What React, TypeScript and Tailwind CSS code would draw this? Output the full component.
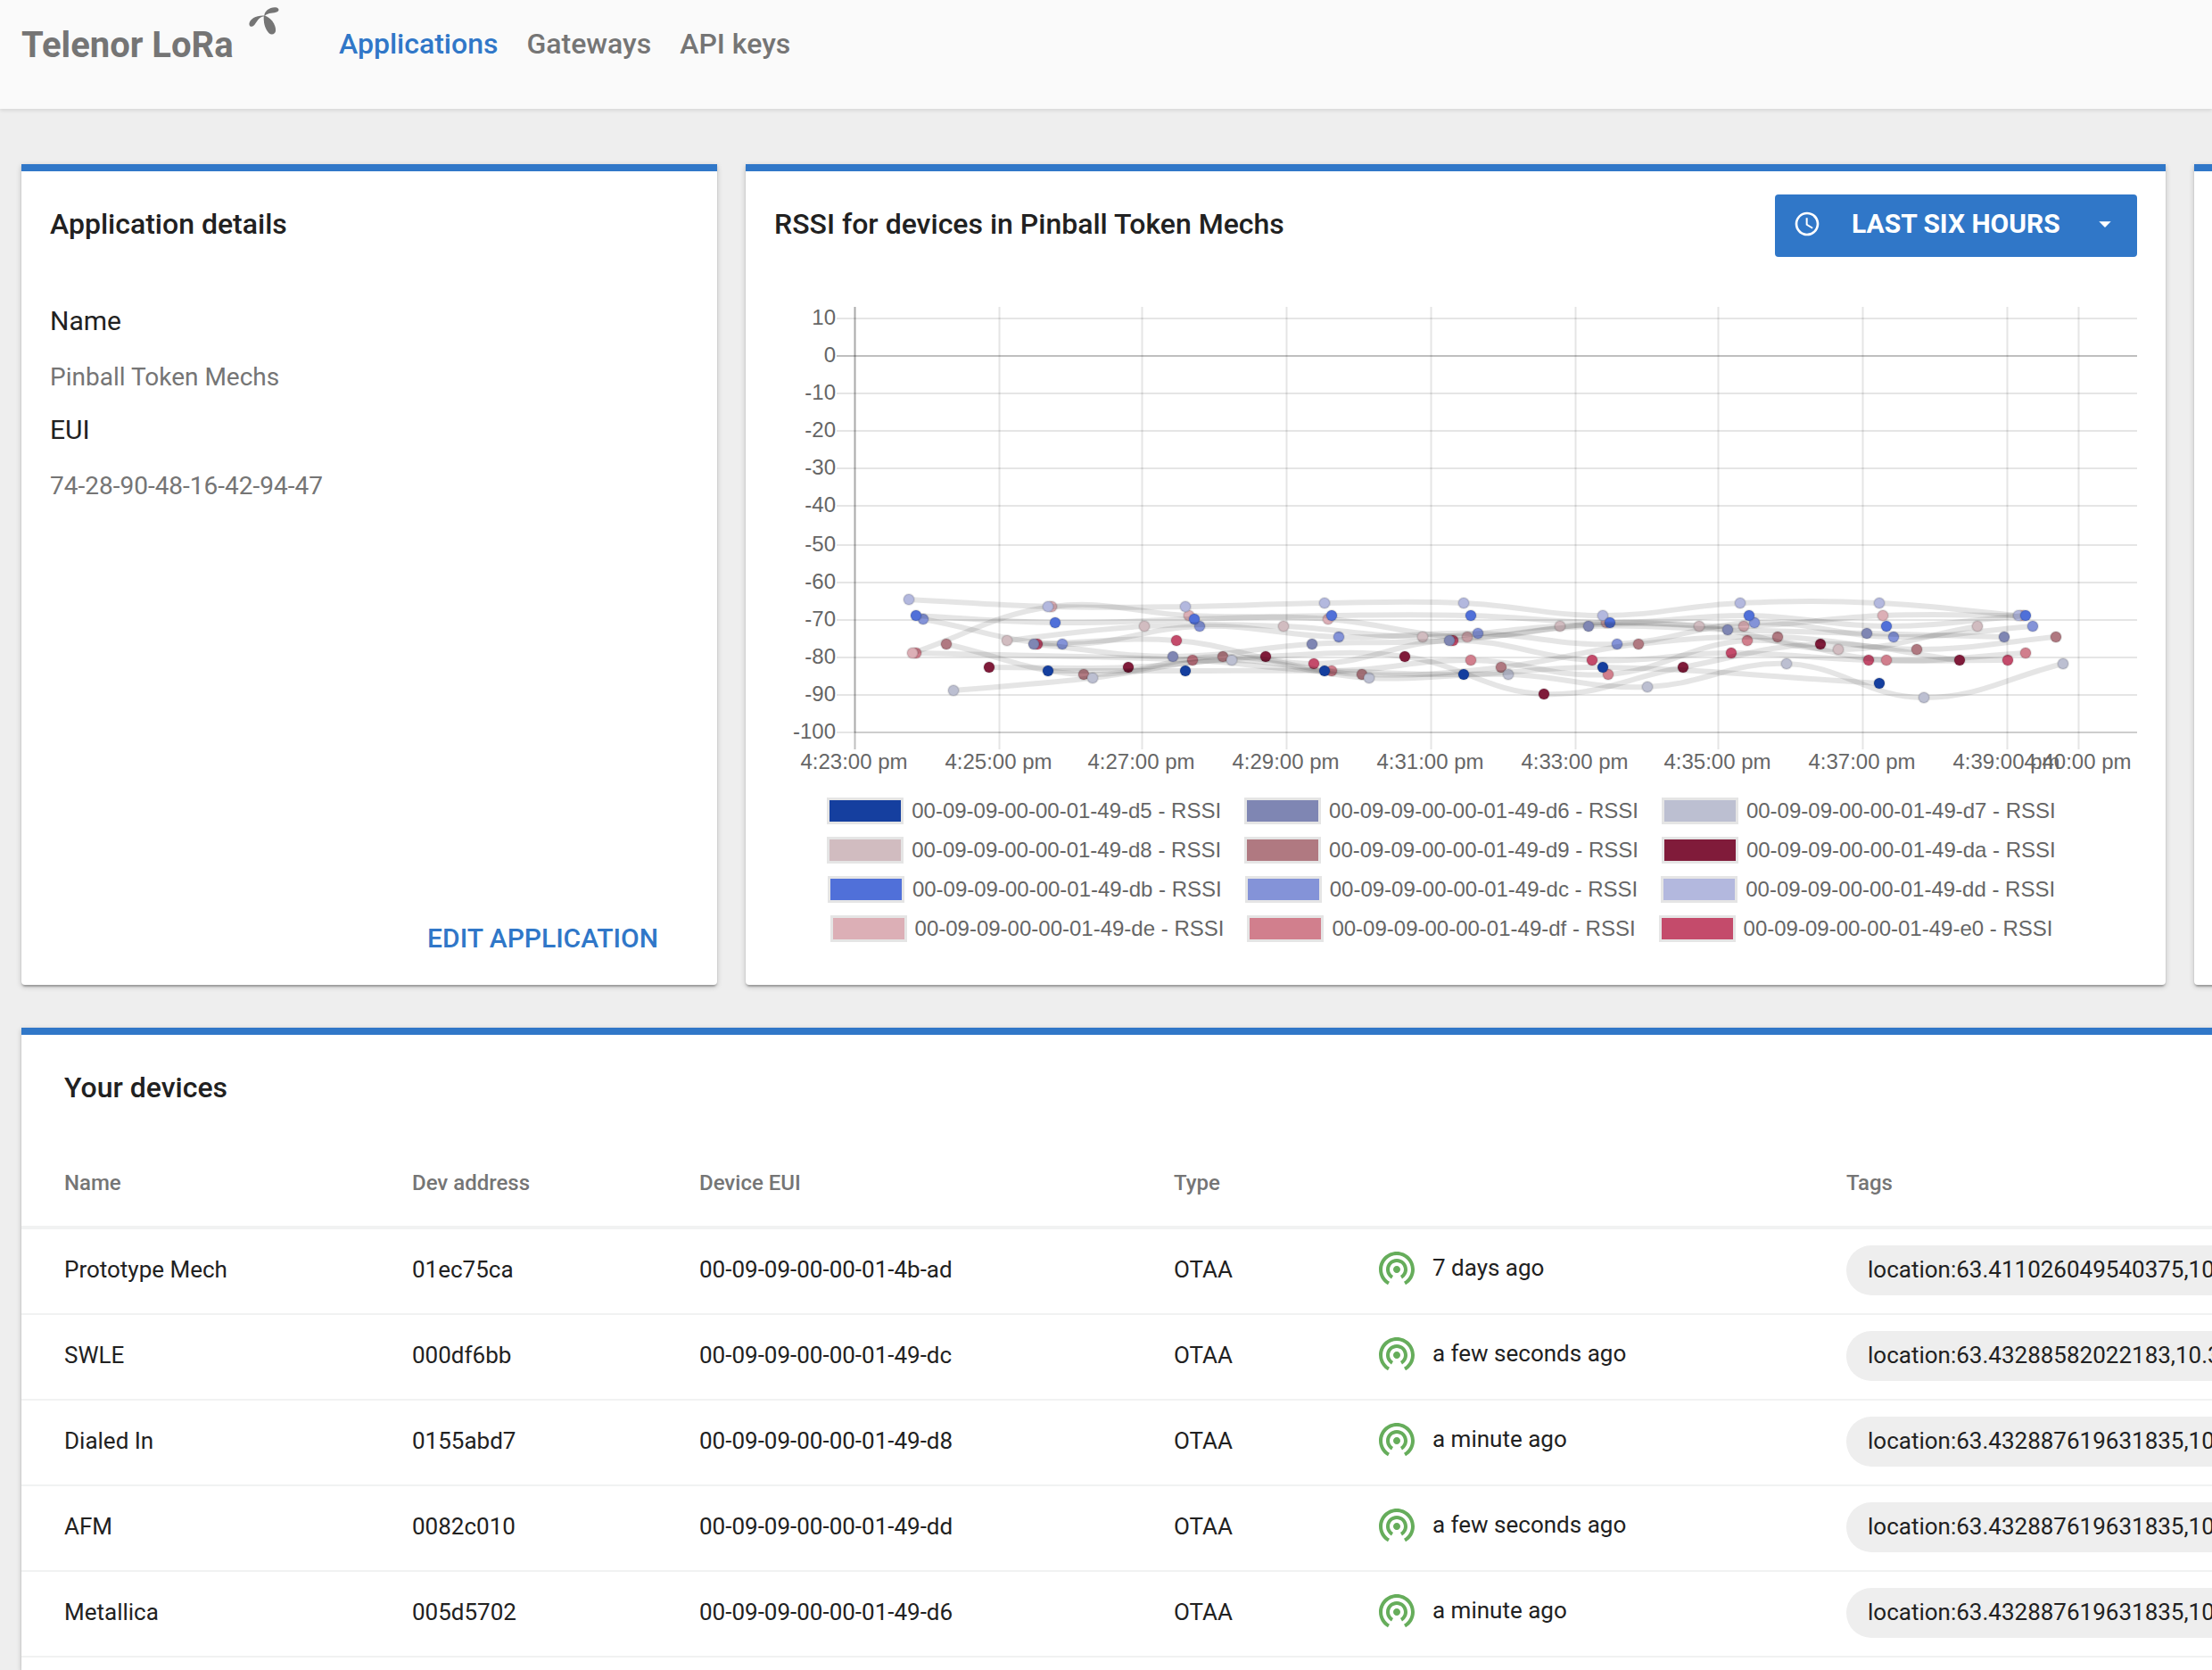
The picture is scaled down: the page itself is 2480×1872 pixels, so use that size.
import { ReactNode } from "react";
import clsx from "clsx";
import { MdAccessTime, MdArrowDropDown, MdWifiTethering } from "react-icons/md";

type Point = [number, number];

type Series = {
  eui: string;
  color: string;
  points: Point[];
};

type Device = {
  name: string;
  address: string;
  eui: string;
  seen: string;
  tag: string;
};

/* ===============================
   DATA
=============================== */

const navLinks = [
  { label: "Applications", href: "#applications", active: true },
  { label: "Gateways", href: "#gateways", active: false },
  { label: "API keys", href: "#api-keys", active: false },
];

const devices: Device[] = [
  {
    name: "Prototype Mech",
    address: "01ec75ca",
    eui: "00-09-09-00-00-01-4b-ad",
    seen: "7 days ago",
    tag: "location:63.411026049540375,10.39",
  },
  {
    name: "SWLE",
    address: "000df6bb",
    eui: "00-09-09-00-00-01-49-dc",
    seen: "a few seconds ago",
    tag: "location:63.43288582022183,10.39",
  },
  {
    name: "Dialed In",
    address: "0155abd7",
    eui: "00-09-09-00-00-01-49-d8",
    seen: "a minute ago",
    tag: "location:63.432887619631835,10.39",
  },
  {
    name: "AFM",
    address: "0082c010",
    eui: "00-09-09-00-00-01-49-dd",
    seen: "a few seconds ago",
    tag: "location:63.432887619631835,10.39",
  },
  {
    name: "Metallica",
    address: "005d5702",
    eui: "00-09-09-00-00-01-49-d6",
    seen: "a minute ago",
    tag: "location:63.432887619631835,10.39",
  },
];

// points are in chart units, see the viewBox of RssiChart
const series: Series[] = [
  {
    eui: "00-09-09-00-00-01-49-d5",
    color: "#153f9f",
    points: [[307, 432], [461, 432], [617, 432], [773, 436], [929, 428], [1239, 446]],
  },
  {
    eui: "00-09-09-00-00-01-49-d6",
    color: "#7f86b3",
    points: [[291, 402], [447, 416], [603, 402], [757, 398], [913, 382], [1069, 386], [1225, 390], [1379, 394]],
  },
  {
    eui: "00-09-09-00-00-01-49-d7",
    color: "#bcbfd1",
    points: [[201, 454], [357, 440], [513, 420], [667, 440], [823, 436], [979, 450], [1135, 424], [1289, 462], [1445, 424]],
  },
  {
    eui: "00-09-09-00-00-01-49-d8",
    color: "#d1bcc0",
    points: [[261, 398], [415, 382], [571, 382], [727, 394], [881, 382], [1037, 382], [1193, 408], [1349, 382]],
  },
  {
    eui: "00-09-09-00-00-01-49-d9",
    color: "#b07981",
    points: [[193, 402], [347, 436], [503, 416], [659, 436], [815, 428], [969, 402], [1125, 394], [1281, 408], [1437, 394]],
  },
  {
    eui: "00-09-09-00-00-01-49-da",
    color: "#801b3a",
    points: [[241, 428], [397, 428], [551, 416], [707, 416], [863, 458], [1019, 428], [1173, 402], [1329, 420]],
  },
  {
    eui: "00-09-09-00-00-01-49-db",
    color: "#5070d9",
    points: [[159, 370], [315, 378], [471, 374], [625, 370], [781, 370], [937, 378], [1093, 370], [1247, 382], [1403, 370]],
  },
  {
    eui: "00-09-09-00-00-01-49-dc",
    color: "#8493d8",
    points: [[167, 374], [323, 402], [477, 382], [633, 394], [789, 390], [945, 402], [1099, 378], [1255, 394], [1411, 382]],
  },
  {
    eui: "00-09-09-00-00-01-49-dd",
    color: "#b3b8de",
    points: [[151, 352], [307, 360], [461, 360], [617, 356], [773, 356], [929, 370], [1083, 356], [1239, 356], [1395, 370]],
  },
  {
    eui: "00-09-09-00-00-01-49-de",
    color: "#dcafb6",
    points: [[155, 412], [311, 360], [465, 370], [621, 374], [777, 394], [933, 378], [1087, 382], [1243, 370], [1399, 370]],
  },
  {
    eui: "00-09-09-00-00-01-49-df",
    color: "#d17f8d",
    points: [[159, 412], [469, 420], [625, 432], [781, 420], [935, 436], [1091, 398], [1247, 420], [1403, 412]],
  },
  {
    eui: "00-09-09-00-00-01-49-e0",
    color: "#c44b6b",
    points: [[295, 402], [451, 398], [605, 424], [761, 398], [917, 420], [1073, 412], [1227, 420], [1383, 420]],
  },
];

const yTicks = [
  { label: "10", y: 37 },
  { label: "0", y: 79 },
  { label: "-10", y: 121 },
  { label: "-20", y: 163 },
  { label: "-30", y: 205 },
  { label: "-40", y: 247 },
  { label: "-50", y: 291 },
  { label: "-60", y: 333 },
  { label: "-70", y: 375 },
  { label: "-80", y: 417 },
  { label: "-90", y: 459 },
  { label: "-100", y: 501 },
];

const xTicks = [
  { label: "4:23:00 pm", x: 90.5 },
  { label: "4:25:00 pm", x: 252.5 },
  { label: "4:27:00 pm", x: 412.5 },
  { label: "4:29:00 pm", x: 574.5 },
  { label: "4:31:00 pm", x: 736.5 },
  { label: "4:33:00 pm", x: 898.5 },
  { label: "4:35:00 pm", x: 1058.5 },
  { label: "4:37:00 pm", x: 1220.5 },
  { label: "4:39:00 pm", x: 1382.5 },
  { label: "4:40:00 pm", x: 1462.5 },
];

/* ===============================
   CHART
=============================== */

// smooth line through the points, tension 0.4
function splinePath(points: Point[]) {
  const tension = 0.4;

  const controls = points.map((cur, i) => {
    const prev = points[i - 1] ?? cur;
    const next = points[i + 1] ?? cur;
    const before = Math.hypot(cur[0] - prev[0], cur[1] - prev[1]);
    const after = Math.hypot(next[0] - cur[0], next[1] - cur[1]);
    const fa = (tension * before) / (before + after);
    const fb = (tension * after) / (before + after);
    const dx = next[0] - prev[0];
    const dy = next[1] - prev[1];
    return {
      left: [cur[0] - fa * dx, cur[1] - fa * dy],
      right: [cur[0] + fb * dx, cur[1] + fb * dy],
    };
  });

  return points
    .map((p, i) =>
      i === 0
        ? `M${p[0]} ${p[1]}`
        : `C${controls[i - 1].right.join(" ")} ${controls[i].left.join(" ")} ${p[0]} ${p[1]}`
    )
    .join("");
}

function RssiChart() {
  return (
    <svg
      viewBox="0 0 1528 552"
      className="mt-8 block h-auto w-full font-['Liberation_Sans',Arial,sans-serif] text-2xl"
      role="img"
      aria-label="RSSI per device over time"
    >
      {/* GRID */}
      <g stroke="#000" strokeWidth="2" strokeOpacity="0.1">
        {yTicks.map((tick) => (
          <line
            key={tick.label}
            x1="70"
            x2="1528"
            y1={tick.y}
            y2={tick.y}
            strokeOpacity={tick.label === "0" ? 0.25 : 0.1}
          />
        ))}
        {xTicks.map((tick, i) => (
          <line
            key={tick.label}
            x1={tick.x}
            x2={tick.x}
            y1="24"
            y2="520"
            strokeOpacity={i === 0 ? 0.25 : 0.1}
          />
        ))}
        <line x1="90.5" x2="90.5" y1="24" y2="501" />
        <line x1="90" x2="1528" y1="501" y2="501" />
      </g>

      {/* TICK LABELS */}
      <g fill="#666">
        {yTicks.map((tick) => (
          <text key={tick.label} x="69" y={tick.y + 7} textAnchor="end">
            {tick.label}
          </text>
        ))}
        {xTicks.map((tick) => (
          <text key={tick.label} x={tick.x - 1} y="542" textAnchor="middle">
            {tick.label}
          </text>
        ))}
      </g>

      {/* first series ends up on top */}
      {[...series].reverse().map((s) => (
        <g key={s.eui} stroke="#000" strokeOpacity="0.1">
          <path d={splinePath(s.points)} fill="none" strokeWidth="6" />
          {s.points.map(([x, y]) => (
            <circle key={x} cx={x} cy={y} r="6" fill={s.color} strokeWidth="2" />
          ))}
        </g>
      ))}
    </svg>
  );
}

function Legend() {
  return (
    <ul className="mt-[25px] grid gap-5 pr-[29px] font-['Liberation_Sans',Arial,sans-serif] text-2xl leading-6 text-[#666]">
      {[0, 3, 6, 9].map((start) => (
        <li key={start}>
          <ul className="flex justify-center gap-[29px]">
            {series.slice(start, start + 3).map((s) => (
              <li key={s.eui} className="flex gap-3 whitespace-nowrap">
                <span
                  className="h-6 w-20 shadow-[0_0_0_3px_#e5e5e5]"
                  style={{ backgroundColor: s.color }}
                />
                {s.eui} - RSSI
              </li>
            ))}
          </ul>
        </li>
      ))}
    </ul>
  );
}

/* ===============================
   LAYOUT PARTS
=============================== */

function Card({ className, children }: { className?: string; children?: ReactNode }) {
  return (
    <section
      className={clsx(
        "flex flex-col border-t-8 border-[#3077c8] bg-white pt-[26px] shadow-[0_2px_6px_rgba(0,0,0,0.2),0_2px_2px_rgba(0,0,0,0.14),0_4px_2px_-2px_rgba(0,0,0,0.12)]",
        className
      )}
    >
      {children}
    </section>
  );
}

function CardTitle({ children }: { children: ReactNode }) {
  return <h2 className="mt-[13px] text-[32px] leading-10 font-medium">{children}</h2>;
}

function Logo() {
  return (
    <svg viewBox="0 0 34 31" className="-mt-[19px] h-[31px] w-[34px]" fill="currentColor" aria-hidden="true">
      <path d="M17.3 9.6C17.5 4.5 23.5-.2 29.8.3c4 .4 4.8 3.6 2 5-3.8 1.8-10 .6-14 4.6z" />
      <path d="M17.3 9.5C9 8.8 1 13 .4 18.4c-.3 3.3 2.8 4.3 5 2.4C9 17.4 10.3 11 17.2 10.2z" />
      <path d="M16.8 10c-.6 7 1.2 14.7 5.8 19.2 3 2.6 7.4 1 7.5-3.2 0-7-5.6-14.6-12.5-16.5z" />
    </svg>
  );
}

function TimeRange() {
  return (
    <label className="flex h-[70px] w-[406px] items-center rounded bg-[#3077c8] px-5 pb-1 text-white">
      <MdAccessTime className="size-8" />
      <select
        aria-label="Time range"
        defaultValue="6h"
        className="ml-[34px] flex-1 appearance-none bg-transparent text-[30px] leading-9 font-bold uppercase"
      >
        <option value="1h">Last hour</option>
        <option value="6h">Last six hours</option>
        <option value="24h">Last day</option>
      </select>
      <MdArrowDropDown className="size-8" />
    </label>
  );
}

function DeviceTable() {
  return (
    <table className="mt-[39px] w-full table-fixed border-separate border-spacing-0 text-left">
      <colgroup>
        <col className="w-[390px]" />
        <col className="w-[322px]" />
        <col className="w-[532px]" />
        <col className="w-[226px]" />
        <col className="w-[528px]" />
        <col />
      </colgroup>
      <thead className="text-2xl leading-8 text-[#757575]">
        <tr>
          {["Name", "Dev address", "Device EUI", "Type", "", "Tags"].map((label) => (
            <th key={label} className="h-[100px] border-b-4 border-[#f1f2f2] pl-12 font-medium">
              {label}
            </th>
          ))}
        </tr>
      </thead>
      <tbody className="text-[26px] leading-8">
        {devices.map((device) => (
          <tr key={device.name} className="*:h-24 *:border-b-2 *:border-[#f1f2f2] *:pb-1 *:pl-12">
            <td>{device.name}</td>
            <td>{device.address}</td>
            <td>{device.eui}</td>
            <td>OTAA</td>
            <td>
              <div className="mb-1 flex items-center gap-4">
                <MdWifiTethering className="size-12 text-[#66ad5b]" />
                {device.seen}
              </div>
            </td>
            <td>
              <div className="mt-0.5 flex">
                <span className="flex h-14 items-center rounded-full bg-[#eee] px-6 pb-0.5">{device.tag}</span>
              </div>
            </td>
          </tr>
        ))}
      </tbody>
    </table>
  );
}

/* ===============================
   PAGE
=============================== */

export default function App() {
  return (
    <div className="flex min-h-screen flex-col overflow-hidden bg-[#eee] font-[Roboto,sans-serif] text-[#212121]">
      <header className="flex h-[122px] items-start bg-[#fafafa] px-6 pt-[27px] text-[#757575] shadow-[0_2px_4px_rgba(0,0,0,0.1)]">
        <a href="#home" className="flex w-[356px] items-start gap-[17px] text-[40px] leading-[48px] font-bold">
          Telenor LoRa
          <Logo />
        </a>
        <nav className="flex h-11 items-center gap-8 text-[32px] leading-10 font-medium">
          {navLinks.map((link) => (
            <a key={link.label} href={link.href} className={clsx(link.active && "text-[#3077c8]")}>
              {link.label}
            </a>
          ))}
        </nav>
      </header>

      {/* content is wider than the window, the last card runs off to the right */}
      <main className="flex w-[131.613%] flex-1 flex-col px-6 pt-[62px]">
        <div className="grid grid-cols-4 gap-8">
          <Card className="rounded-b px-8">
            <CardTitle>Application details</CardTitle>
            <dl className="mt-[71px] leading-9">
              <dt className="text-[30px]">Name</dt>
              <dd className="mt-[27px] text-[28px] text-[#757575]">Pinball Token Mechs</dd>
              <dt className="mt-[23px] text-[30px]">EUI</dt>
              <dd className="mt-[27px] text-[28px] text-[#757575]">74-28-90-48-16-42-94-47</dd>
            </dl>
            <button className="mt-auto mr-[34px] mb-[34px] self-end text-[30px] leading-9 font-medium text-[#3077c8] uppercase">
              Edit application
            </button>
          </Card>

          <Card className="col-span-2 rounded-b px-8 pb-[51px]">
            <div className="flex items-start justify-between">
              <CardTitle>RSSI for devices in Pinball Token Mechs</CardTitle>
              <TimeRange />
            </div>
            <RssiChart />
            <Legend />
          </Card>

          <Card className="rounded-b px-8" />
        </div>

        <Card className="mt-12 flex-1">
          <div className="pl-12">
            <CardTitle>Your devices</CardTitle>
          </div>
          <DeviceTable />
        </Card>
      </main>
    </div>
  );
}
